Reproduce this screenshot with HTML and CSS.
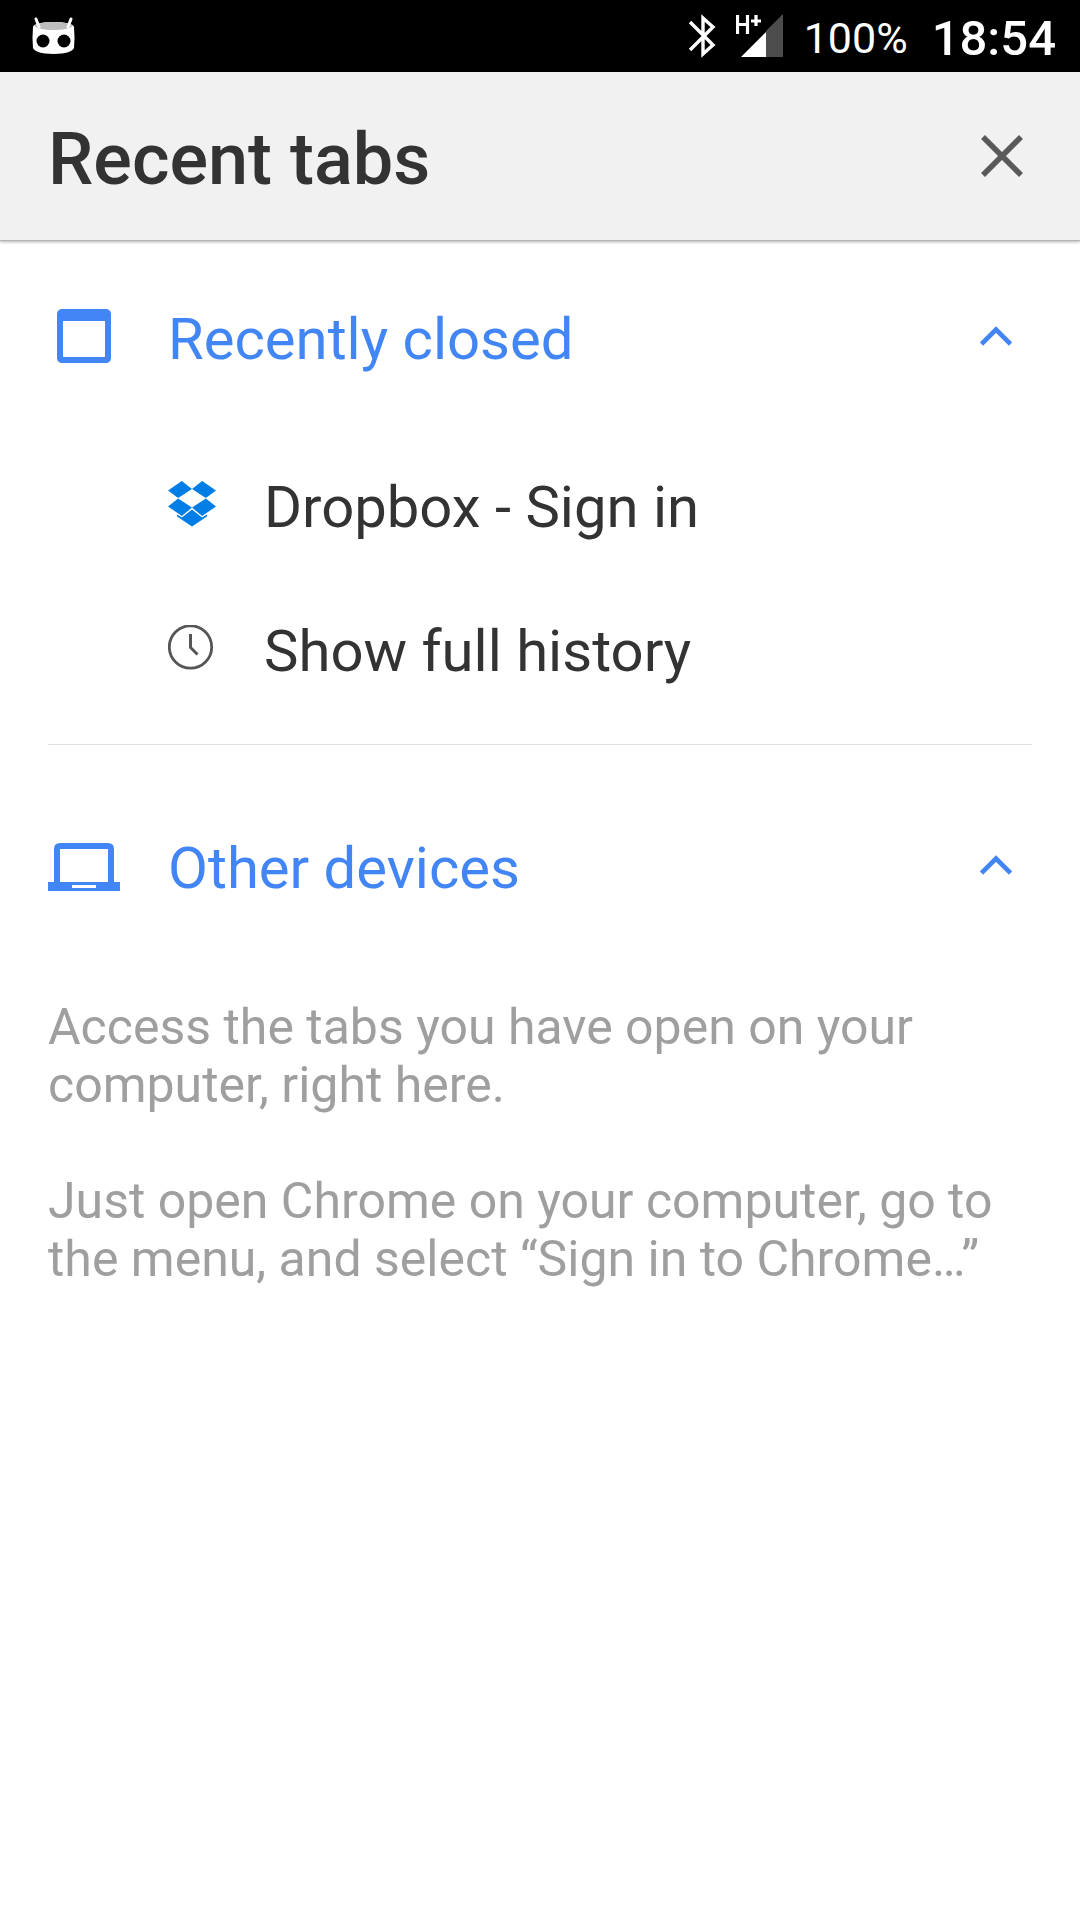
FILE: index.html
```html
<!DOCTYPE html>
<html lang="en">
<head>
<meta charset="utf-8">
<meta name="viewport" content="width=device-width, initial-scale=1">
<title>Recent tabs</title>
<link rel="stylesheet" href="styles.css">
</head>
<body>
<div class="status-bar">
  <svg class="icon-mod" width="44" height="40" viewBox="0 0 44 40" aria-hidden="true">
    <path d="M1 11C1 8 10 6 21.500 6S42 8 42 11Q43 22 42 32C41 35 34 38 21.500 38S2 35 1 32Q0 22 1 11Z" fill="#fff"/>
    <ellipse cx="21.500" cy="10" rx="18.500" ry="4" fill="#bdbdbd"/>
    <path d="M4 3l3 8M39 3l-3 8" stroke="#fff" stroke-width="3" stroke-linecap="round"/>
    <circle cx="11" cy="25" r="6.500"/><circle cx="32" cy="25" r="6.500"/>
  </svg>
  <div class="status-info">
    <svg class="icon-bluetooth" width="28" height="44" viewBox="0 0 28 44" aria-hidden="true">
      <path d="M2 8L25 31L15 40V4L25 13L2 36" fill="none" stroke="#fff" stroke-width="3.400"/>
    </svg>
    <svg class="icon-signal" width="48" height="44" viewBox="0 0 48 44" aria-hidden="true">
      <path d="M47 0V43H30V17Z" fill="#4d4d4d"/>
      <path d="M5 43L30 18V43Z" fill="#fff"/>
      <path d="M1.500 1V20M11.500 1V20M1.500 10.500H11.500M15 7H25M20 1V12" fill="none" stroke="#fff" stroke-width="3.200"/>
    </svg>
    <span class="battery">100%</span>
    <time class="clock">18:54</time>
  </div>
</div>

<header class="header">
  <h1 class="title">Recent tabs</h1>
  <button class="close" type="button" aria-label="Close">
    <svg width="42" height="42" viewBox="0 0 42 42" aria-hidden="true"><path d="M2 2L40 40M40 2L2 40" stroke="#5a5a5a" stroke-width="5.500"/></svg>
  </button>
</header>

<main class="content">
  <section class="group">
    <h2 class="group-heading">
      <button class="group-toggle" type="button" aria-expanded="true">
        <svg class="group-icon" width="72" height="54" viewBox="0 0 72 54" aria-hidden="true"><path fill="#4285f4" fill-rule="evenodd" d="M14.500 0H57.500Q63 0 63 5.500V48.500Q63 54 57.500 54H14.500Q9 54 9 48.500V5.500Q9 0 14.500 0ZM15 12V48H57V12Z"/></svg>
        <span class="label">Recently closed</span>
        <svg class="chevron" width="32" height="20" viewBox="0 0 32 20" aria-hidden="true"><path d="M1.500 18L16 3.500L30.500 18" fill="none" stroke="#4285f4" stroke-width="4.600"/></svg>
      </button>
    </h2>
    <ul class="tab-list">
      <li><a class="tab" href="#dropbox">
        <svg class="tab-icon" width="48" height="46" viewBox="0 0 45 46" preserveAspectRatio="none" aria-hidden="true">
          <path fill="#007ee5" d="M13 0L22.500 8L9.500 17L0 9.500ZM32 0L45 9.500L35.500 17L22.500 8ZM9.500 17.500L22.500 26.500L13 35L0 25.500ZM35.500 17.500L45 25.500L32 35L22.500 26.500ZM22.500 28.500L32 36.500L36.500 33.500V35.500L22.500 45.500L8.500 35.500V33.500L13 36.500Z"/>
        </svg>
        <span class="label">Dropbox - Sign in</span>
      </a></li>
      <li><a class="tab" href="#history">
        <svg class="tab-icon" width="48" height="46" viewBox="0 0 48 46" aria-hidden="true">
          <g fill="none" stroke="#555"><circle cx="22.500" cy="22" r="21.200" stroke-width="2.800"/><path d="M22.500 9V22.500L29.500 29.500" stroke-width="3"/></g>
        </svg>
        <span class="label">Show full history</span>
      </a></li>
    </ul>
  </section>
  <hr class="divider">
  <section class="group">
    <h2 class="group-heading">
      <button class="group-toggle" type="button" aria-expanded="true">
        <svg class="group-icon" width="72" height="54" viewBox="0 0 72 54" aria-hidden="true"><path fill="#4285f4" fill-rule="evenodd" d="M0 44H6V11Q6 5 12 5H60Q66 5 66 11V44H72V53H0ZM12 11V44H60V11ZM24 47V50H48V47Z"/></svg>
        <span class="label">Other devices</span>
        <svg class="chevron" width="32" height="20" viewBox="0 0 32 20" aria-hidden="true"><path d="M1.500 18L16 3.500L30.500 18" fill="none" stroke="#4285f4" stroke-width="4.600"/></svg>
      </button>
    </h2>
    <div class="promo">
      <p>Access the tabs you have open on your computer, right here.</p>
      <p>Just open Chrome on your computer, go to the menu, and select “Sign in to Chrome…”</p>
    </div>
  </section>
</main>
</body>
</html>
```
FILE: styles.css
```css
* {
  box-sizing: border-box;
}

body {
  margin: 0;
  background: #fff;
  color: #333;
  font-family: Roboto, "Liberation Sans", sans-serif;
}

svg {
  display: block;
  flex: none;
}

h1, h2, p, ul {
  margin: 0;
  padding: 0;
  font-weight: inherit;
}

.status-bar {
  display: flex;
  align-items: center;
  justify-content: space-between;
  height: 72px;
  padding: 0 24px 0 32px;
  background: #000;
  color: #fff;
}

.status-info {
  display: flex;
  align-items: center;
  gap: 20px;
}

.battery,
.clock {
  padding-top: 4px;
}

.battery {
  font-size: 43px;
}

.clock {
  padding-left: 4px;
  font-size: 49px;
  font-weight: 500;
}

.header {
  display: flex;
  align-items: center;
  justify-content: space-between;
  height: 168px;
  padding: 0 49px 0 48px;
  background: #f1f1f1;
  box-shadow: 0 1px 0 #b4b4b4, 0 2px 3px rgba(0, 0, 0, 0.3);
}

.title {
  padding-top: 6px;
  font-size: 72px;
  font-weight: 500;
}

.close {
  padding: 8px;
  border: 0;
  background: none;
}

.group-toggle {
  display: flex;
  align-items: center;
  width: 100%;
  height: 192px;
  padding: 0 68px 0 48px;
  border: 0;
  background: none;
  color: #4285f4;
  font: inherit;
  text-align: left;
}

.group-icon {
  margin-right: 48px;
}

.label {
  flex: 1;
  padding-top: 6px;
}

.tab-list {
  list-style: none;
}

.tab {
  display: flex;
  align-items: center;
  gap: 48px;
  height: 144px;
  padding: 0 48px 0 168px;
  color: #333;
  font-size: 58px;
  text-decoration: none;
}

.divider {
  height: 1px;
  margin: 24px 48px;
  border: 0;
  background: #e2e2e2;
}

.group-heading {
  font-size: 58px;
}

.promo {
  display: grid;
  gap: 58px;
  padding: 37px 48px;
  color: #9f9f9f;
  font-size: 50px;
  line-height: 58px;
}
```
